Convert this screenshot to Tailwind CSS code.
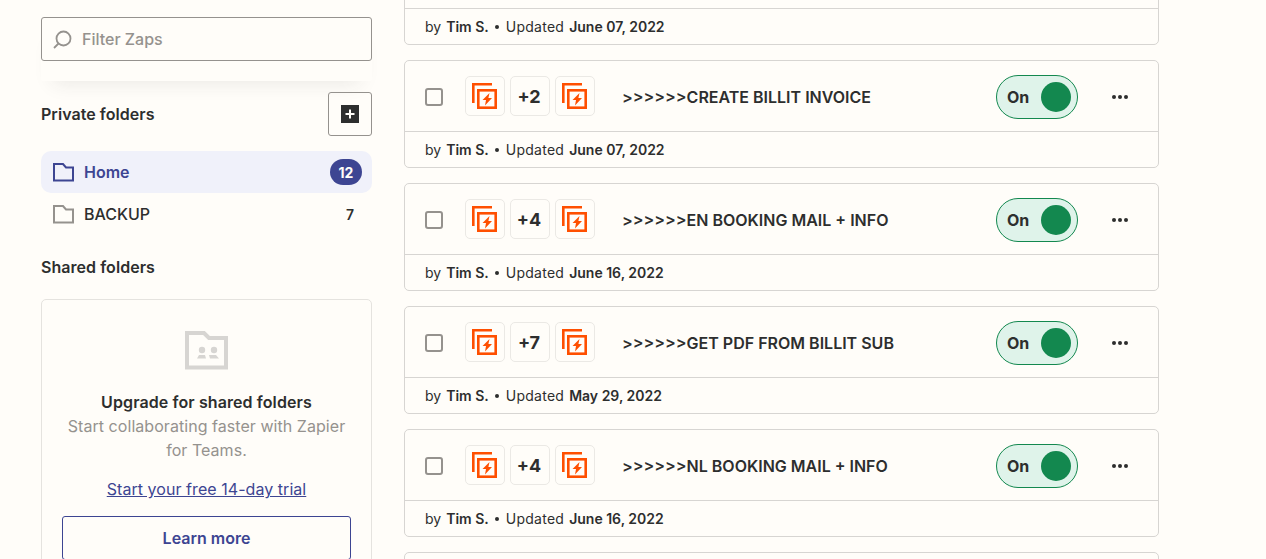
<!DOCTYPE html>
<html lang="en" class="bg-[#fffdf9]">
<head>
<meta charset="UTF-8">
<title>Zaps</title>
<script src="https://cdn.jsdelivr.net/npm/@tailwindcss/browser@4"></script>
</head>
<body class="h-[559px] overflow-hidden bg-[#fffdf9] font-['Inter',sans-serif] text-[#2d2e2e]">
<div class="flex items-start gap-[32px] pl-[41px]">

  <!-- sidebar -->
  <aside class="w-[331px] shrink-0 pt-[17px]">
    <div class="pb-[20px] rounded-b-[3px] shadow-[0_14px_20px_-12px_rgba(45,46,46,0.10)]">
      <div class="flex h-[44px] items-center rounded-[3px] border border-[#95928e] bg-[#fffdf9] pl-[11px]">
        <svg width="20" height="20" viewBox="0 0 20 20" fill="none" stroke="#95928e" stroke-width="1.800"><circle cx="10.500" cy="9.500" r="7"/><path d="M5.500 14.500 1 19"/></svg>
        <span class="ml-[9px] text-[16px] font-medium text-[#95928e]">Filter Zaps</span>
      </div>
    </div>

    <div class="mt-[11px] flex items-center justify-between">
      <h2 class="text-[16px] font-semibold tracking-[0.05px]">Private folders</h2>
      <button class="flex h-[44px] w-[44px] items-center justify-center rounded-[3px] border border-[#95928e]">
        <svg width="18" height="18" viewBox="0 0 18 18"><rect width="18" height="18" fill="#2d2e2e"/><path d="M9 4.500v9M4.500 9h9" stroke="#fffdf9" stroke-width="2"/></svg>
      </button>
    </div>

    <div class="mt-[15px] flex h-[42px] items-center rounded-[10px] bg-[#f0f1fa] pl-[12px] pr-[10px]">
      <svg width="21" height="19" viewBox="0 0 21 19" fill="none" stroke="#3d4592" stroke-width="2"><path d="M1 18V1h9l3 3.500h7V18"/><path d="M0 17.500h21"/></svg>
      <span class="ml-[10px] text-[16px] font-semibold text-[#3d4592]">Home</span>
      <span class="ml-auto flex h-[26px] w-[32px] items-center justify-center rounded-full bg-[#3d4592] text-[14px] font-bold text-[#fffdf9]">12</span>
    </div>
    <div class="flex h-[42px] items-center pl-[12px] pr-[18px]">
      <svg width="21" height="19" viewBox="0 0 21 19" fill="none" stroke="#95928e" stroke-width="2"><path d="M1 18V1h9l3 3.500h7V18"/><path d="M0 17.500h21"/></svg>
      <span class="ml-[10px] text-[16px] font-medium">BACKUP</span>
      <span class="ml-auto text-[14px] font-semibold">7</span>
    </div>

    <h2 class="mt-[20px] text-[16px] leading-[24px] font-semibold tracking-[0.05px]">Shared folders</h2>

    <div class="mt-[20px] h-[300px] rounded-[5px] border border-[#e5e3df] px-[20px] pt-[31px] text-center">
      <svg class="mx-auto" width="43" height="39" viewBox="0 0 43 39" fill="none"><path d="M2 37V2h17l5 5h17v30" stroke="#d7d5d2" stroke-width="4"/><path d="M0 36.500h43" stroke="#d7d5d2" stroke-width="4"/><circle cx="17" cy="19" r="3.200" fill="#d7d5d2"/><circle cx="29" cy="19" r="3.200" fill="#d7d5d2"/><path d="M12 27.500l2-3.500h6l1 3.500zM24 24h7l3 3.500h-9z" fill="#d7d5d2"/></svg>
      <p class="mt-[20px] text-[16px] leading-[24px] font-semibold tracking-[0.1px]">Upgrade for shared folders</p>
      <p class="text-[16px] leading-[24px] tracking-[0.05px] text-[#95928e]">Start collaborating faster with Zapier for Teams.</p>
      <a class="mt-[15px] block text-[16px] leading-[24px] tracking-[0.05px] text-[#3d4592] underline">Start your free 14-day trial</a>
      <button class="mt-[15px] h-[44px] w-full rounded-[3px] border border-[#3d4592] text-[16px] font-semibold text-[#3d4592]">Learn more</button>
    </div>
  </aside>

  <!-- zap list -->
  <main class="mt-[-63px] flex w-[755px] shrink-0 flex-col gap-[15px]">

    <div class="rounded-[5px] border border-[#d7d5d2]">
      <div class="flex h-[71px] items-center border-b border-[#d7d5d2] pl-[20px] pr-[30px] pt-[2px]">
        <span class="h-[18px] w-[18px] rounded-[3px] border-2 border-[#95928e]"></span>
      </div>
      <div class="flex h-[35px] items-center pl-[20px] text-[14px]">by <b class="ml-[5px] font-semibold">Tim S.</b><span class="ml-[6px] mr-[7px] h-[4px] w-[4px] rounded-full bg-[#2d2e2e]"></span><span class="tracking-[0.25px]">Updated</span> <b class="ml-[5px] font-semibold">June 07, 2022</b></div>
    </div>

    <div class="rounded-[5px] border border-[#d7d5d2]">
      <div class="flex h-[71px] items-center border-b border-[#d7d5d2] pl-[20px] pr-[30px] pt-[2px]">
        <span class="h-[18px] w-[18px] rounded-[3px] border-2 border-[#95928e]"></span>
        <span class="mb-[2px] ml-[22px] flex h-[40px] w-[40px] items-center justify-center rounded-[5px] border border-[#ebe9e5]">
          <svg width="26" height="26" viewBox="0 0 26 26" fill="none" stroke="#ff4f00"><path d="M1.300 20V1.300H20" stroke-width="2.600"/><rect x="6.300" y="7.300" width="17.400" height="17.400" stroke-width="2.600"/><path d="M17.500 10 10.500 17h3.500l-1 5.500 7-7.500h-3.600z" fill="#ff4f00" stroke="none"/></svg>
        </span>
        <span class="mb-[2px] ml-[5px] flex h-[40px] w-[40px] items-center justify-center rounded-[5px] border border-[#ebe9e5] pr-[2px] text-[18px] font-bold">+2</span>
        <span class="mb-[2px] ml-[5px] flex h-[40px] w-[40px] items-center justify-center rounded-[5px] border border-[#ebe9e5]">
          <svg width="26" height="26" viewBox="0 0 26 26" fill="none" stroke="#ff4f00"><path d="M1.300 20V1.300H20" stroke-width="2.600"/><rect x="6.300" y="7.300" width="17.400" height="17.400" stroke-width="2.600"/><path d="M17.500 10 10.500 17h3.500l-1 5.500 7-7.500h-3.600z" fill="#ff4f00" stroke="none"/></svg>
        </span>
        <span class="ml-[27px] text-[16px] font-semibold">&gt;&gt;&gt;&gt;&gt;&gt;CREATE BILLIT INVOICE</span>
        <span class="ml-auto flex h-[44px] w-[82px] items-center justify-between rounded-full border border-[#13884f] bg-[#dff3ea] pl-[10px] pr-[6px] text-[16px] font-bold">On<span class="h-[30px] w-[30px] rounded-full bg-[#13884f]"></span></span>
        <span class="ml-[34px] flex gap-[2px]"><i class="h-[4px] w-[4px] rounded-full bg-[#2d2e2e]"></i><i class="h-[4px] w-[4px] rounded-full bg-[#2d2e2e]"></i><i class="h-[4px] w-[4px] rounded-full bg-[#2d2e2e]"></i></span>
      </div>
      <div class="flex h-[35px] items-center pl-[20px] text-[14px]">by <b class="ml-[5px] font-semibold">Tim S.</b><span class="ml-[6px] mr-[7px] h-[4px] w-[4px] rounded-full bg-[#2d2e2e]"></span><span class="tracking-[0.25px]">Updated</span> <b class="ml-[5px] font-semibold">June 07, 2022</b></div>
    </div>

    <div class="rounded-[5px] border border-[#d7d5d2]">
      <div class="flex h-[71px] items-center border-b border-[#d7d5d2] pl-[20px] pr-[30px] pt-[2px]">
        <span class="h-[18px] w-[18px] rounded-[3px] border-2 border-[#95928e]"></span>
        <span class="mb-[2px] ml-[22px] flex h-[40px] w-[40px] items-center justify-center rounded-[5px] border border-[#ebe9e5]">
          <svg width="26" height="26" viewBox="0 0 26 26" fill="none" stroke="#ff4f00"><path d="M1.300 20V1.300H20" stroke-width="2.600"/><rect x="6.300" y="7.300" width="17.400" height="17.400" stroke-width="2.600"/><path d="M17.500 10 10.500 17h3.500l-1 5.500 7-7.500h-3.600z" fill="#ff4f00" stroke="none"/></svg>
        </span>
        <span class="mb-[2px] ml-[5px] flex h-[40px] w-[40px] items-center justify-center rounded-[5px] border border-[#ebe9e5] pr-[2px] text-[18px] font-bold">+4</span>
        <span class="mb-[2px] ml-[5px] flex h-[40px] w-[40px] items-center justify-center rounded-[5px] border border-[#ebe9e5]">
          <svg width="26" height="26" viewBox="0 0 26 26" fill="none" stroke="#ff4f00"><path d="M1.300 20V1.300H20" stroke-width="2.600"/><rect x="6.300" y="7.300" width="17.400" height="17.400" stroke-width="2.600"/><path d="M17.500 10 10.500 17h3.500l-1 5.500 7-7.500h-3.600z" fill="#ff4f00" stroke="none"/></svg>
        </span>
        <span class="ml-[27px] text-[16px] font-semibold">&gt;&gt;&gt;&gt;&gt;&gt;EN BOOKING MAIL + INFO</span>
        <span class="ml-auto flex h-[44px] w-[82px] items-center justify-between rounded-full border border-[#13884f] bg-[#dff3ea] pl-[10px] pr-[6px] text-[16px] font-bold">On<span class="h-[30px] w-[30px] rounded-full bg-[#13884f]"></span></span>
        <span class="ml-[34px] flex gap-[2px]"><i class="h-[4px] w-[4px] rounded-full bg-[#2d2e2e]"></i><i class="h-[4px] w-[4px] rounded-full bg-[#2d2e2e]"></i><i class="h-[4px] w-[4px] rounded-full bg-[#2d2e2e]"></i></span>
      </div>
      <div class="flex h-[35px] items-center pl-[20px] text-[14px]">by <b class="ml-[5px] font-semibold">Tim S.</b><span class="ml-[6px] mr-[7px] h-[4px] w-[4px] rounded-full bg-[#2d2e2e]"></span><span class="tracking-[0.25px]">Updated</span> <b class="ml-[5px] font-semibold">June 16, 2022</b></div>
    </div>

    <div class="rounded-[5px] border border-[#d7d5d2]">
      <div class="flex h-[71px] items-center border-b border-[#d7d5d2] pl-[20px] pr-[30px] pt-[2px]">
        <span class="h-[18px] w-[18px] rounded-[3px] border-2 border-[#95928e]"></span>
        <span class="mb-[2px] ml-[22px] flex h-[40px] w-[40px] items-center justify-center rounded-[5px] border border-[#ebe9e5]">
          <svg width="26" height="26" viewBox="0 0 26 26" fill="none" stroke="#ff4f00"><path d="M1.300 20V1.300H20" stroke-width="2.600"/><rect x="6.300" y="7.300" width="17.400" height="17.400" stroke-width="2.600"/><path d="M17.500 10 10.500 17h3.500l-1 5.500 7-7.500h-3.600z" fill="#ff4f00" stroke="none"/></svg>
        </span>
        <span class="mb-[2px] ml-[5px] flex h-[40px] w-[40px] items-center justify-center rounded-[5px] border border-[#ebe9e5] pr-[2px] text-[18px] font-bold">+7</span>
        <span class="mb-[2px] ml-[5px] flex h-[40px] w-[40px] items-center justify-center rounded-[5px] border border-[#ebe9e5]">
          <svg width="26" height="26" viewBox="0 0 26 26" fill="none" stroke="#ff4f00"><path d="M1.300 20V1.300H20" stroke-width="2.600"/><rect x="6.300" y="7.300" width="17.400" height="17.400" stroke-width="2.600"/><path d="M17.500 10 10.500 17h3.500l-1 5.500 7-7.500h-3.600z" fill="#ff4f00" stroke="none"/></svg>
        </span>
        <span class="ml-[27px] text-[16px] font-semibold">&gt;&gt;&gt;&gt;&gt;&gt;GET PDF FROM BILLIT SUB</span>
        <span class="ml-auto flex h-[44px] w-[82px] items-center justify-between rounded-full border border-[#13884f] bg-[#dff3ea] pl-[10px] pr-[6px] text-[16px] font-bold">On<span class="h-[30px] w-[30px] rounded-full bg-[#13884f]"></span></span>
        <span class="ml-[34px] flex gap-[2px]"><i class="h-[4px] w-[4px] rounded-full bg-[#2d2e2e]"></i><i class="h-[4px] w-[4px] rounded-full bg-[#2d2e2e]"></i><i class="h-[4px] w-[4px] rounded-full bg-[#2d2e2e]"></i></span>
      </div>
      <div class="flex h-[35px] items-center pl-[20px] text-[14px]">by <b class="ml-[5px] font-semibold">Tim S.</b><span class="ml-[6px] mr-[7px] h-[4px] w-[4px] rounded-full bg-[#2d2e2e]"></span><span class="tracking-[0.25px]">Updated</span> <b class="ml-[5px] font-semibold">May 29, 2022</b></div>
    </div>

    <div class="rounded-[5px] border border-[#d7d5d2]">
      <div class="flex h-[71px] items-center border-b border-[#d7d5d2] pl-[20px] pr-[30px] pt-[2px]">
        <span class="h-[18px] w-[18px] rounded-[3px] border-2 border-[#95928e]"></span>
        <span class="mb-[2px] ml-[22px] flex h-[40px] w-[40px] items-center justify-center rounded-[5px] border border-[#ebe9e5]">
          <svg width="26" height="26" viewBox="0 0 26 26" fill="none" stroke="#ff4f00"><path d="M1.300 20V1.300H20" stroke-width="2.600"/><rect x="6.300" y="7.300" width="17.400" height="17.400" stroke-width="2.600"/><path d="M17.500 10 10.500 17h3.500l-1 5.500 7-7.500h-3.600z" fill="#ff4f00" stroke="none"/></svg>
        </span>
        <span class="mb-[2px] ml-[5px] flex h-[40px] w-[40px] items-center justify-center rounded-[5px] border border-[#ebe9e5] pr-[2px] text-[18px] font-bold">+4</span>
        <span class="mb-[2px] ml-[5px] flex h-[40px] w-[40px] items-center justify-center rounded-[5px] border border-[#ebe9e5]">
          <svg width="26" height="26" viewBox="0 0 26 26" fill="none" stroke="#ff4f00"><path d="M1.300 20V1.300H20" stroke-width="2.600"/><rect x="6.300" y="7.300" width="17.400" height="17.400" stroke-width="2.600"/><path d="M17.500 10 10.500 17h3.500l-1 5.500 7-7.500h-3.600z" fill="#ff4f00" stroke="none"/></svg>
        </span>
        <span class="ml-[27px] text-[16px] font-semibold">&gt;&gt;&gt;&gt;&gt;&gt;NL BOOKING MAIL + INFO</span>
        <span class="ml-auto flex h-[44px] w-[82px] items-center justify-between rounded-full border border-[#13884f] bg-[#dff3ea] pl-[10px] pr-[6px] text-[16px] font-bold">On<span class="h-[30px] w-[30px] rounded-full bg-[#13884f]"></span></span>
        <span class="ml-[34px] flex gap-[2px]"><i class="h-[4px] w-[4px] rounded-full bg-[#2d2e2e]"></i><i class="h-[4px] w-[4px] rounded-full bg-[#2d2e2e]"></i><i class="h-[4px] w-[4px] rounded-full bg-[#2d2e2e]"></i></span>
      </div>
      <div class="flex h-[35px] items-center pl-[20px] text-[14px]">by <b class="ml-[5px] font-semibold">Tim S.</b><span class="ml-[6px] mr-[7px] h-[4px] w-[4px] rounded-full bg-[#2d2e2e]"></span><span class="tracking-[0.25px]">Updated</span> <b class="ml-[5px] font-semibold">June 16, 2022</b></div>
    </div>

    <div class="h-[107px] rounded-[5px] border border-[#d7d5d2]"></div>
  </main>
</div>
</body>
</html>
